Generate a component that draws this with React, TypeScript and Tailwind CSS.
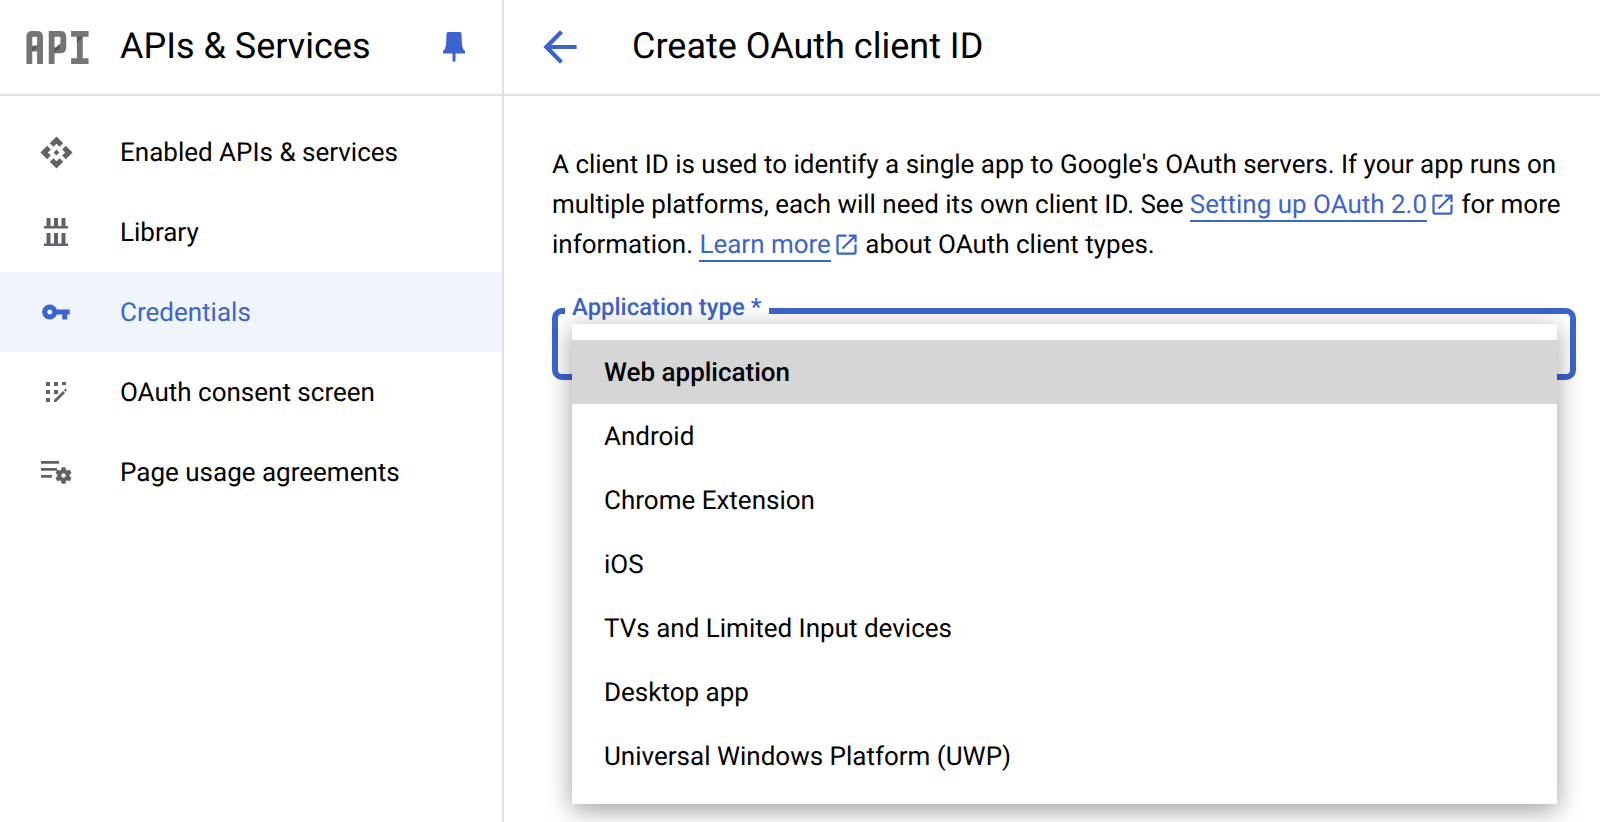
import React from 'react';

const BLUE = '#3d64cc';

const navItems = [
  { label: 'Enabled APIs & services', icon: 'api' },
  { label: 'Library', icon: 'library' },
  { label: 'Credentials', icon: 'key' },
  { label: 'OAuth consent screen', icon: 'oauth' },
  { label: 'Page usage agreements', icon: 'usage' },
];

const appTypes = [
  'Web application',
  'Android',
  'Chrome Extension',
  'iOS',
  'TVs and Limited Input devices',
  'Desktop app',
  'Universal Windows Platform (UWP)',
];

const ApiLogo = () => (
  <svg width="63" height="33" viewBox="0 0 64 34" className="shrink-0">
    <path fill="#757575" d="M0 34V6q0-6 6-6h5q6 0 6 6v28h-6V21H6v13zM6 15h5V7q0-1-1-1H7q-1 0-1 1z" />
    <path fill="#757575" d="M23 34V0h12q6 0 6 6v11q0 6-6 6h-6v11zM29 17h5q1 0 1-1V7q0-1-1-1h-5z" />
    <path fill="#757575" d="M46 0h18v6h-6v22h6v6H46v-6h6V6h-6z" />
    <path fill="#555555" d="M6 21v-4l5-2v1zM29 23v-5l6-5v4zM52 6h6l-6 6z" />
  </svg>
);

const NavIcon = ({ name, active }: { name: string; active: boolean }) => {
  const color = active ? BLUE : '#5f6368';
  if (name === 'api') {
    return (
      <svg width="35" height="35" viewBox="0 0 24 24" fill={color}>
        <path d="M14 12l-2 2-2-2 2-2 2 2zm-2-6l2.12 2.12 2.5-2.5L12 1 7.38 5.62l2.5 2.5L12 6zm-6 6l2.12-2.12-2.5-2.5L1 12l4.62 4.62 2.5-2.5L6 12zm12 0l-2.12 2.12 2.5 2.5L23 12l-4.62-4.62-2.5 2.5L18 12zm-6 6l-2.12-2.12-2.5 2.5L12 23l4.62-4.62-2.5-2.5L12 18z" />
      </svg>
    );
  }
  if (name === 'library') {
    return (
      <svg width="24" height="28" viewBox="0 0 24 28" fill={color}>
        <path d="M2.500 0h4v8h-4zM10 0h4v8h-4zM17.500 0h4v8h-4zM0 8h24v2.500H0zM2.500 15h4v11h-4zM10 15h4v11h-4zM17.500 15h4v11h-4zM0 25.500h24V28H0z" />
      </svg>
    );
  }
  if (name === 'key') {
    return (
      <svg width="30" height="30" viewBox="0 0 24 24" fill={color}>
        <path d="M12.65 10C11.83 7.67 9.61 6 7 6c-3.31 0-6 2.69-6 6s2.69 6 6 6c2.61 0 4.83-1.67 5.65-4H17v4h4v-4h2v-4H12.65zM7 14c-1.1 0-2-.9-2-2s.9-2 2-2 2 .9 2 2-.9 2-2 2z" />
      </svg>
    );
  }
  if (name === 'oauth') {
    return (
      <svg width="22" height="20" viewBox="0 0 22 20" fill={color}>
        <path d="M1 0h4v4H1zM9 0h4v4H9zM17 0h4v3h-4zM1 8h4v4H1zM9 8h4v4H9zM1 16h4v4H1z" />
        <path d="M9 18L18 9l2 2-9 9H9zM19 8l1.500-1.500 1.500 1.500-1.500 2z" />
      </svg>
    );
  }
  return (
    <svg width="31" height="23" viewBox="0 0 31 23" fill={color}>
      <path d="M0 0h18v2.800H0zM0 7h16v2.800H0zM0 14h11v2.800H0z" />
      <path
        transform="translate(12.3 4.3) scale(0.85)"
        d="M19.14 12.94c.04-.3.06-.61.06-.94 0-.32-.02-.64-.07-.94l2.03-1.58c.18-.14.23-.41.12-.61l-1.92-3.32c-.12-.22-.37-.29-.59-.22l-2.39.96c-.5-.38-1.03-.7-1.62-.94l-.36-2.54c-.04-.24-.24-.41-.48-.41h-3.84c-.24 0-.43.17-.47.41l-.36 2.54c-.59.24-1.13.57-1.62.94l-2.39-.96c-.22-.08-.47 0-.59.22L2.74 8.87c-.12.21-.08.47.12.61l2.03 1.58c-.05.3-.09.63-.09.94s.02.64.07.94l-2.03 1.58c-.18.14-.23.41-.12.61l1.92 3.32c.12.22.37.29.59.22l2.39-.96c.5.38 1.03.7 1.62.94l.36 2.54c.05.24.24.41.48.41h3.84c.24 0 .44-.17.47-.41l.36-2.54c.59-.24 1.13-.56 1.62-.94l2.39.96c.22.08.47 0 .59-.22l1.92-3.32c.12-.22.07-.47-.12-.61l-2.01-1.58zM12 14.600c-1.430 0-2.600-1.170-2.600-2.600s1.170-2.600 2.600-2.600 2.600 1.170 2.600 2.600-1.170 2.600-2.600 2.600z"
      />
    </svg>
  );
};

const ExternalIcon = () => (
  <svg width="27" height="27" viewBox="0 0 24 24" fill={BLUE} className="ml-[2px] mr-[-1px] inline-block align-[-5px]">
    <path d="M19 19H5V5h7V3H5c-1.110 0-2 .9-2 2v14c0 1.100.89 2 2 2h14c1.100 0 2-.9 2-2v-7h-2v7zM14 3v2h3.590l-9.830 9.830 1.410 1.410L19 6.410V10h2V3h-7z" />
  </svg>
);

export default function App() {
  return (
    <div className="flex h-[822px] w-[1600px] overflow-hidden bg-white text-black font-['Roboto',sans-serif] [text-rendering:geometricPrecision]">
      {/* Sidebar */}
      <aside className="w-[504px] shrink-0 border-r-2 border-[#e0e0e0]">
        <div className="flex h-[96px] items-center border-b-2 border-[#e0e0e0] pl-[26px]">
          <ApiLogo />
          <span className="ml-[31px] pb-[2px] text-[36px] leading-none">APIs &amp; Services</span>
          <svg width="22" height="30" viewBox="0 0 22 30" fill={BLUE} className="ml-auto mr-[37px]">
            <path d="M5 0h12q1.500 0 1.500 1.500L19 13q.5 4 3 6v2.500h-9.500v7.500l-1.500 1-1.500-1v-7.500H0V19q2.500-2 3-6l.5-11.500Q3.500 0 5 0z" />
          </svg>
        </div>
        <nav className="pt-4">
          {navItems.map((item) => {
            const active = item.label === 'Credentials';
            return (
              <div key={item.label} className={`flex h-[80px] items-center ${active ? 'bg-[#f0f4fd] text-[#3d64cc]' : ''}`}>
                <div className="flex w-[112px] shrink-0 justify-center">
                  <NavIcon name={item.icon} active={active} />
                </div>
                <span className="ml-[8px] pt-[2px] text-[26px] leading-none">{item.label}</span>
              </div>
            );
          })}
        </nav>
      </aside>

      {/* Main */}
      <main className="min-w-0 flex-1">
        <div className="flex h-[96px] items-center border-b-2 border-[#e0e0e0] pl-[31px]">
          <svg width="50" height="50" viewBox="0 0 24 24" fill={BLUE}>
            <path d="M20 11H7.830l5.590-5.590L12 4l-8 8 8 8 1.410-1.410L7.830 13H20v-2z" />
          </svg>
          <h1 className="ml-[47px] pb-[2px] text-[36px] font-normal leading-none">Create OAuth client ID</h1>
        </div>
        <div className="pl-[48px] pr-[24px] pt-[50px]">
          <p className="text-[25.970px] leading-[39.800px]">
            A client ID is used to identify a single app to Google's OAuth servers. If your app runs on multiple platforms, each will need its own client ID. See{' '}
            <span className="border-b-2 border-[#3d64cc] text-[#3d64cc]">Setting up OAuth 2.0</span>
            <ExternalIcon /> for more information.{' '}
            <span className="border-b-2 border-[#3d64cc] text-[#3d64cc]">Learn more</span>
            <ExternalIcon /> about OAuth client types.
          </p>

          {/* Select with open menu */}
          <div className="relative mt-[43px] h-[72px] rounded-[10px] border-[6px] border-[#3d64cc]">
            <label className="absolute left-[7px] top-[-22px] bg-white pl-[7px] pr-[8px] text-[23.900px] font-medium leading-[30px] text-[#3d64cc]">
              Application type *
            </label>
            <ul className="absolute left-[14px] top-[10px] w-[985px] bg-white py-4 shadow-[0_6px_24px_rgba(0,0,0,0.38)]">
              {appTypes.map((type, i) => (
                <li
                  key={type}
                  className={`flex h-[64px] items-center pl-[32px] pt-[2px] text-[26px] ${i === 0 ? 'bg-[#d6d6d6] font-medium' : ''}`}
                >
                  {type}
                </li>
              ))}
            </ul>
          </div>
        </div>
      </main>
    </div>
  );
}
